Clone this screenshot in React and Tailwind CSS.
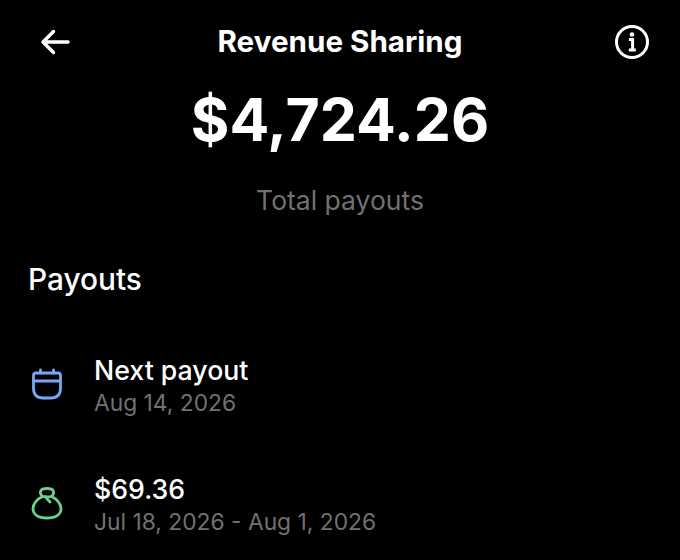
import React from 'react'

const BackIcon = () => (
  <svg className="ml-[10px]" width="30" height="26" viewBox="0 0 30 26" fill="none" stroke="#fff" strokeWidth="3.4" strokeLinecap="round" strokeLinejoin="round">
    <path d="M28 13H3M13.5 2.5 3 13l10.5 10.5" />
  </svg>
)

const InfoIcon = () => (
  <svg width="36" height="36" viewBox="0 0 36 36" fill="none">
    <circle cx="18" cy="18" r="15.5" stroke="#fff" strokeWidth="3" />
    <circle cx="18" cy="10.5" r="2.3" fill="#fff" />
    <path d="M15 15.5h3.6v10M14.8 26h7" stroke="#fff" strokeWidth="3" />
  </svg>
)

const CalendarIcon = () => (
  <svg width="32" height="32" viewBox="0 0 32 32" fill="none" stroke="#7aa7f5" strokeWidth="2.8" strokeLinecap="round" strokeLinejoin="round">
    <path d="M5 5H27C28.5 5 29.5 6 29.5 7.5V20C29.5 26.5 26 30 20 30H12C6 30 2.5 26.5 2.5 20V7.5C2.5 6 3.5 5 5 5Z" />
    <path d="M3 13H29M9.5 2V5M22.5 2V5" />
  </svg>
)

const BagIcon = () => (
  <svg width="32" height="34" viewBox="0 0 32 34" fill="none" stroke="#6fd08c" strokeWidth="2.8" strokeLinecap="round" strokeLinejoin="round">
    <path d="M11.5 10.5C6 13 2 18 2 22.5C2 28.5 7.5 32 16 32C24.5 32 30 28.5 30 22.5C30 18 26 13 20.5 10.5" />
    <path d="M11.5 10.5C9.5 8.5 9 6 10 4.5C10.6 3.3 12 2.5 16 2.5C20 2.5 21.4 3.3 22 4.5C23 6 22.5 8.5 20.5 10.5C18 11 14 11 11.5 10.5Z" />
    <path d="M14 10.5L19 16" />
  </svg>
)

const PayoutRow = ({ icon, title, sub }) => (
  <div className="flex items-center">
    <div className="w-[94px] pl-[31px] shrink-0 mt-[-6px]">{icon}</div>
    <div className="flex flex-col">
      <span className="text-[26.7px] leading-[32px] font-medium text-white">{title}</span>
      <span className="text-[22.8px] leading-[32px] mt-[1px] text-[#717171]">{sub}</span>
    </div>
  </div>
)

export default function App() {
  return (
    <div className="w-[680px] h-[560px] overflow-hidden bg-black text-white font-['Inter',sans-serif]">
      <div className="grid grid-cols-[1fr_auto_1fr] items-center h-[42px] mt-[21px] px-[30px]">
        <BackIcon />
        <h1 className="text-[29.6px] font-bold leading-[42px] mt-[-2px]">Revenue Sharing</h1>
        <div className="justify-self-end"><InfoIcon /></div>
      </div>
      <div className="text-center text-[59px] leading-[72px] font-bold mt-[21px]">$4,724.26</div>
      <div className="text-center text-[26.5px] leading-[32px] text-[#717171] mt-[28px]">Total payouts</div>
      <h2 className="pl-[28px] text-[29.8px] leading-[36px] font-medium mt-[45px]">Payouts</h2>
      <div className="flex flex-col gap-[54px] mt-[57px]">
        <PayoutRow icon={<CalendarIcon />} title="Next payout" sub="Aug 14, 2026" />
        <PayoutRow icon={<BagIcon />} title="$69.36" sub="Jul 18, 2026 - Aug 1, 2026" />
      </div>
    </div>
  )
}
